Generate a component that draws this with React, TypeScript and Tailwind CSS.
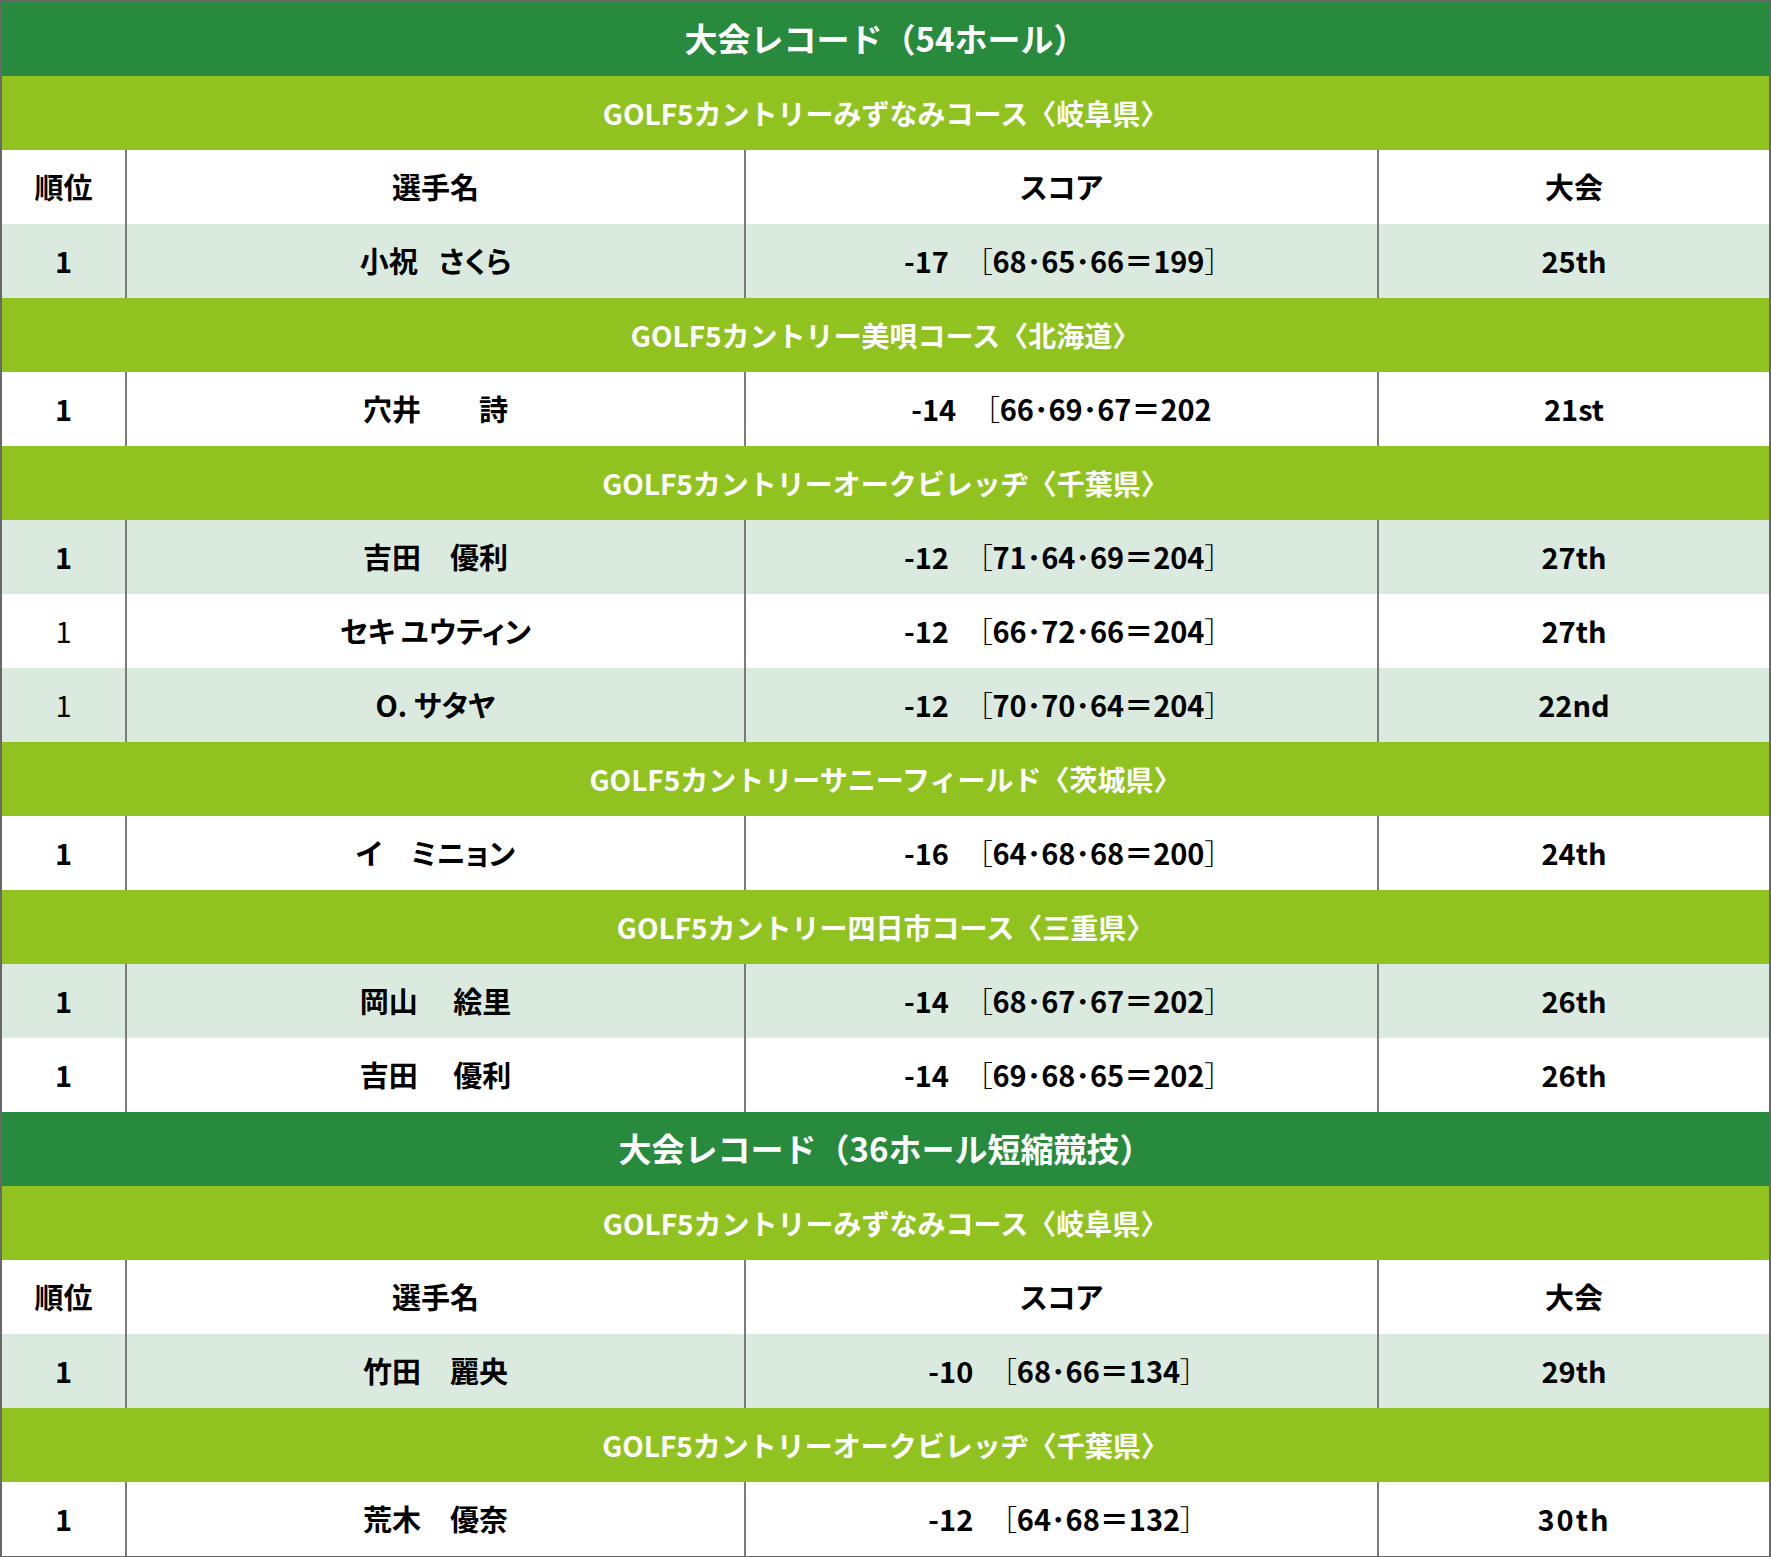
import React from 'react';

type Row = {
  rank: string;
  name: string;
  score: [string, string, boolean];
  round: string;
  shaded?: boolean;
  thinRank?: boolean;
  wideRound?: boolean;
};

type Block =
  | { kind: 'title'; text: string }
  | { kind: 'course'; text: string }
  | { kind: 'head' }
  | { kind: 'row'; row: Row };

const blocks: Block[] = [
  { kind: 'title', text: '大会レコード（54ホール）' },
  { kind: 'course', text: 'GOLF5カントリーみずなみコース〈岐阜県〉' },
  { kind: 'head' },
  { kind: 'row', row: { rank: '1', name: '小祝\u2002 さくら', score: ['-17', '68･65･66＝199', true], round: '25th', shaded: true } },
  { kind: 'course', text: 'GOLF5カントリー美唄コース〈北海道〉' },
  { kind: 'row', row: { rank: '1', name: '穴井　　詩', score: ['-14', '66･69･67＝202', false], round: '21st' } },
  { kind: 'course', text: 'GOLF5カントリーオークビレッヂ〈千葉県〉' },
  { kind: 'row', row: { rank: '1', name: '吉田　優利', score: ['-12', '71･64･69＝204', true], round: '27th', shaded: true } },
  { kind: 'row', row: { rank: '1', name: 'セキ ユウティン', score: ['-12', '66･72･66＝204', true], round: '27th', thinRank: true } },
  { kind: 'row', row: { rank: '1', name: 'O. サタヤ', score: ['-12', '70･70･64＝204', true], round: '22nd', shaded: true, thinRank: true } },
  { kind: 'course', text: 'GOLF5カントリーサニーフィールド〈茨城県〉' },
  { kind: 'row', row: { rank: '1', name: 'イ　ミニョン', score: ['-16', '64･68･68＝200', true], round: '24th' } },
  { kind: 'course', text: 'GOLF5カントリー四日市コース〈三重県〉' },
  { kind: 'row', row: { rank: '1', name: '岡山　 絵里', score: ['-14', '68･67･67＝202', true], round: '26th', shaded: true } },
  { kind: 'row', row: { rank: '1', name: '吉田　 優利', score: ['-14', '69･68･65＝202', true], round: '26th' } },
  { kind: 'title', text: '大会レコード（36ホール短縮競技）' },
  { kind: 'course', text: 'GOLF5カントリーみずなみコース〈岐阜県〉' },
  { kind: 'head' },
  { kind: 'row', row: { rank: '1', name: '竹田　麗央', score: ['-10', '68･66＝134', true], round: '29th', shaded: true } },
  { kind: 'course', text: 'GOLF5カントリーオークビレッヂ〈千葉県〉' },
  { kind: 'row', row: { rank: '1', name: '荒木　優奈', score: ['-12', '64･68＝132', true], round: '30th', wideRound: true } },
];

const cols = 'grid grid-cols-[123px_619px_633px_1fr]';
const cell = 'flex items-center justify-center';
const divider = 'border-l-2 border-[#7b7b7b]';

function DataRow({ row }: { row: Row }) {
  const [diff, detail, closed] = row.score;
  return (
    <div className={`${cols} h-[74px] ${row.shaded ? 'bg-[#dbeadf]' : 'bg-white'} text-[29px] font-bold text-black [font-feature-settings:'palt']`}>
      <div className={`${cell} ${row.thinRank ? 'font-normal' : ''}`}>{row.rank}</div>
      <div className={`${cell} ${divider} whitespace-pre`}>{row.name}</div>
      <div className={`${cell} ${divider} whitespace-pre`}>
        <span>{diff}</span>
        <span className="font-light">　［</span>
        <span>{detail}</span>
        {closed && <span className="font-light">］</span>}
      </div>
      <div className={`${cell} ${divider} ${row.wideRound ? 'tracking-[2px]' : ''}`}>{row.round}</div>
    </div>
  );
}

function HeadRow() {
  return (
    <div className={`${cols} h-[74px] bg-white text-[29px] font-bold text-black [font-feature-settings:'palt']`}>
      <div className={cell}>順位</div>
      <div className={`${cell} ${divider}`}>選手名</div>
      <div className={`${cell} ${divider}`}>スコア</div>
      <div className={`${cell} ${divider}`}>大会</div>
    </div>
  );
}

export default function App() {
  return (
    <div className="w-[1771px] bg-white font-['Noto_Sans_CJK_JP','Noto_Sans',sans-serif]">
      <div className="border-2 border-[#686868]">
        {blocks.map((b, i) => {
          if (b.kind === 'title') {
            return (
              <div key={i} className="flex h-[74px] items-center justify-center bg-[#288a3c] text-[33px] font-bold text-white">
                {b.text}
              </div>
            );
          }
          if (b.kind === 'course') {
            return (
              <div key={i} className="flex h-[74px] items-center justify-center bg-[#90c320] text-[28px] font-bold text-white">
                {b.text}
              </div>
            );
          }
          if (b.kind === 'head') return <HeadRow key={i} />;
          return <DataRow key={i} row={b.row} />;
        })}
      </div>
    </div>
  );
}
